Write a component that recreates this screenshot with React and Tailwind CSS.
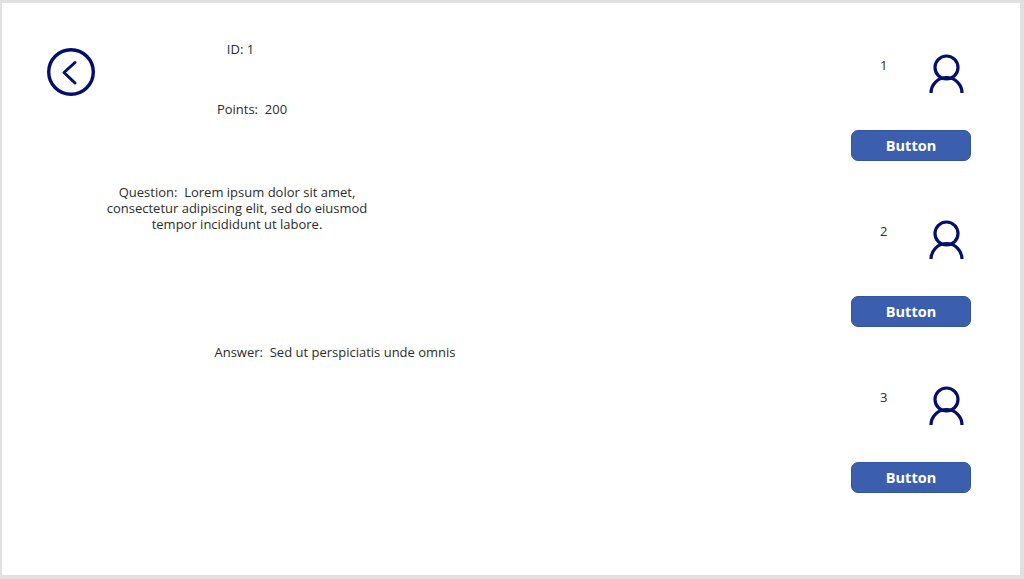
const FONT = "font-['Open_Sans','Noto_Sans',sans-serif]";

function BackIcon() {
  return (
    <svg width="48" height="48" viewBox="0 0 48 48" fill="none" stroke="#03106b" strokeWidth="3.4">
      <circle cx="24" cy="24" r="22.3" />
      <path d="M28 14.5L17 24.5L28 35" strokeWidth="3" strokeLinecap="round" strokeLinejoin="round" />
    </svg>
  );
}

function UserIcon() {
  return (
    <svg width="36" height="40" viewBox="0 0 36 40" fill="none" stroke="#03106b" strokeWidth="3.2">
      <circle cx="18.5" cy="13.5" r="11.5" />
      <path d="M3 39A15.5 15.5 0 0 1 34 39" />
    </svg>
  );
}

function Person({ num }) {
  return (
    <div className="h-[166px] flex flex-col">
      <div className="flex h-[77px]">
        <div className="w-[64px] pl-[29px] pt-[4px] text-[13px] leading-4 text-[#2b2b2b] text-left">{num}</div>
        <div className="ml-[13px] mt-[1px]">
          <UserIcon />
        </div>
      </div>
      <button className="w-[120px] h-[31px] rounded-[7px] bg-[#3b5fae] border border-[#34549b] text-white text-[14.5px] font-bold">
        Button
      </button>
    </div>
  );
}

export default function App() {
  return (
    <div className={`w-[1024px] h-[579px] bg-[#e1e1e1] pl-[2px] pt-[3px] pr-[4px] pb-[4px] overflow-hidden ${FONT}`}>
      <div className="h-full bg-white flex text-[13px] leading-4 text-[#2b2b2b]">
        <div className="ml-[45px] mt-[45px]">
          <BackIcon />
        </div>
        <div className="pt-[38px] flex flex-col">
          <div className="w-[291px] text-center">ID: 1</div>
          <div className="w-[314px] mt-[44px] text-center">Points:&nbsp; 200</div>
          <div className="w-[284px] mt-[67px] text-center">
            Question:&nbsp; Lorem ipsum dolor sit amet,
            <br />
            consectetur adipiscing elit, sed do eiusmod
            <br />
            tempor incididunt ut labore.
          </div>
          <div className="w-[480px] mt-[112px] text-center">Answer:&nbsp; Sed ut perspiciatis unde omnis</div>
        </div>
        <div className="ml-auto mr-[49px] pt-[50px]">
          <Person num="1" />
          <Person num="2" />
          <Person num="3" />
        </div>
      </div>
    </div>
  );
}
